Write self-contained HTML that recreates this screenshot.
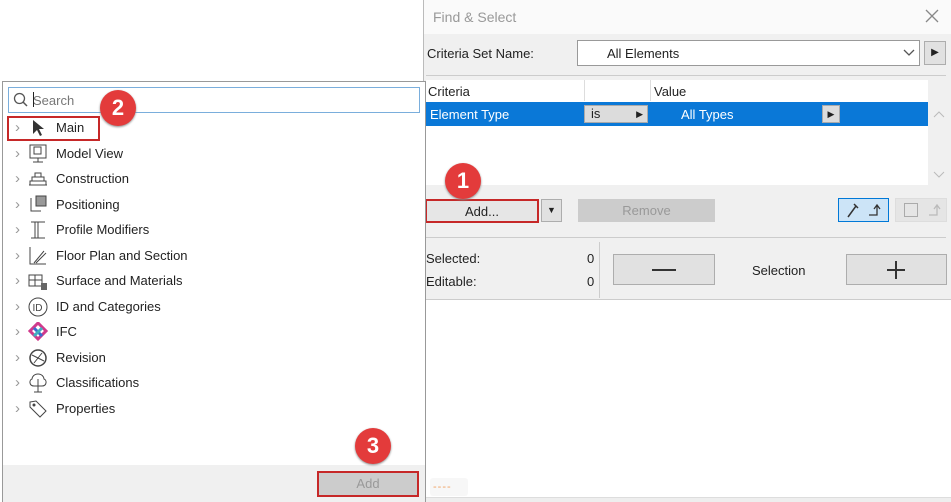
<!DOCTYPE html>
<html><head><style>
*{box-sizing:border-box;margin:0;padding:0}
body{width:951px;height:502px;background:#fff;position:relative;overflow:hidden;font-family:"Liberation Sans",sans-serif;font-size:13px;color:#222}
.a{position:absolute}
.badge{position:absolute;width:36px;height:36px;border-radius:50%;background:#e33b3b;color:#fff;font-weight:bold;font-size:22px;text-align:center;line-height:36px;box-shadow:0 1px 2px #888}
.btn{position:absolute;background:#e1e1e1;border:1px solid #adadad;text-align:center}
.row{position:absolute;left:10px;height:24px;line-height:24px}
.row .ch{position:absolute;left:5px;top:0;color:#999;font-size:15px}
.row svg{position:absolute;left:18px;top:2px}
.row span{position:absolute;left:46px;white-space:nowrap}
</style></head><body>
<div class="a" style="left:423px;top:0;width:528px;height:300px;background:#f0f0f0;border-left:1px solid #bbb;border-bottom:1px solid #ccc"></div>
<div class="a" style="left:424px;top:0;width:527px;height:34px;background:#fafafa"></div>
<div class="a" style="left:433px;top:9px;color:#999;font-size:14px">Find &amp; Select</div>
<svg class="a" style="left:925px;top:9px" width="14" height="14"><path d="M1 1L13 13M13 1L1 13" stroke="#888" stroke-width="1.3"/></svg>
<div class="a" style="left:427px;top:46px;font-size:13px">Criteria Set Name:</div>
<div class="a" style="left:577px;top:40px;width:343px;height:26px;background:#fff;border:1px solid #999"></div>
<div class="a" style="left:607px;top:46px">All Elements</div>
<svg class="a" style="left:903px;top:49px" width="12" height="8"><path d="M1 1L6 6L11 1" fill="none" stroke="#555" stroke-width="1.3"/></svg>
<div class="btn" style="left:924px;top:41px;width:22px;height:24px;font-size:10px;line-height:22px">▶</div>
<div class="a" style="left:426px;top:75px;width:520px;height:1px;background:#ccc"></div>
<div class="a" style="left:426px;top:80px;width:502px;height:105px;background:#fff"></div>
<div class="a" style="left:428px;top:84px">Criteria</div>
<div class="a" style="left:584px;top:80px;width:1px;height:21px;background:#ddd"></div>
<div class="a" style="left:650px;top:80px;width:1px;height:21px;background:#ddd"></div>
<div class="a" style="left:654px;top:84px">Value</div>
<div class="a" style="left:426px;top:102px;width:502px;height:24px;background:#0a78d7"></div>
<div class="a" style="left:430px;top:107px;color:#fff">Element Type</div>
<div class="a" style="left:584px;top:105px;width:64px;height:18px;background:#dcdcdc;border:1px solid #aaa;padding-left:6px;line-height:16px">is<span style="position:absolute;right:4px;font-size:9px">▶</span></div>
<div class="a" style="left:681px;top:107px;color:#fff">All Types</div>
<div class="a" style="left:822px;top:105px;width:18px;height:18px;background:#dcdcdc;border:1px solid #aaa;font-size:9px;text-align:center;line-height:16px">▶</div>
<svg class="a" style="left:933px;top:110px" width="12" height="8"><path d="M1 7L6 2L11 7" fill="none" stroke="#bbb"/></svg>
<svg class="a" style="left:933px;top:171px" width="12" height="8"><path d="M1 1L6 6L11 1" fill="none" stroke="#bbb"/></svg>
<div class="btn" style="left:425px;top:199px;width:114px;height:24px;line-height:22px;border:2px solid #c62828;background:#e6e6e6">Add...</div>
<div class="btn" style="left:541px;top:199px;width:21px;height:23px;font-size:9px;line-height:21px">▼</div>
<div class="btn" style="left:578px;top:199px;width:137px;height:23px;line-height:21px;color:#999;background:#ccc;border-color:#ccc">Remove</div>
<div class="a" style="left:838px;top:198px;width:51px;height:24px;background:#cce4f7;border:1px solid #0078d7"></div>
<svg class="a" style="left:845px;top:201px" width="40" height="18"><path d="M3 16L11 5M9 3l4 4" stroke="#333" stroke-width="1.5" fill="none"/><path d="M24 14h8v-9M29 8l3-4 3 4" stroke="#333" stroke-width="1.3" fill="none"/></svg>
<div class="a" style="left:895px;top:198px;width:52px;height:24px;background:#e5e5e5;border:1px solid #ddd"></div>
<div class="a" style="left:904px;top:203px;width:14px;height:14px;border:1px solid #aaa"></div>
<svg class="a" style="left:926px;top:201px" width="20" height="18"><path d="M3 14h8v-9M8 8l3-4 3 4" stroke="#bbb" stroke-width="1.3" fill="none"/></svg>
<div class="a" style="left:426px;top:237px;width:520px;height:1px;background:#ccc"></div>
<div class="a" style="left:599px;top:242px;width:1px;height:56px;background:#ccc"></div>
<div class="a" style="left:426px;top:251px">Selected:</div><div class="a" style="left:587px;top:251px">0</div>
<div class="a" style="left:426px;top:274px">Editable:</div><div class="a" style="left:587px;top:274px">0</div>
<div class="btn" style="left:613px;top:254px;width:102px;height:31px"><div style="position:absolute;left:38px;top:14px;width:24px;height:2px;background:#333"></div></div>
<div class="a" style="left:752px;top:263px">Selection</div>
<div class="btn" style="left:846px;top:254px;width:101px;height:31px"><div style="position:absolute;left:40px;top:14px;width:18px;height:2px;background:#333"></div><div style="position:absolute;left:48px;top:6px;width:2px;height:18px;background:#333"></div></div>
<div class="a" style="left:425px;top:497px;width:526px;height:5px;background:#eee;border-top:1px solid #ddd"></div>
<div class="a" style="left:430px;top:478px;width:38px;height:18px;background:#f7f7f7;border-radius:3px"></div>
<div class="a" style="left:433px;top:481px;color:#f0a060;font-size:11px;letter-spacing:1px">----</div>
<div class="a" style="left:2px;top:81px;width:424px;height:421px;border:1px solid #999;background:#fff"></div>
<div class="a" style="left:3px;top:465px;width:422px;height:37px;background:#f0f0f0"></div>
<div class="a" style="left:8px;top:87px;width:412px;height:26px;border:1px solid #7aaedc"></div>
<svg class="a" style="left:13px;top:92px" width="16" height="16"><circle cx="6.5" cy="6.5" r="5" fill="none" stroke="#555" stroke-width="1.3"/><line x1="10" y1="10" x2="14" y2="14" stroke="#555" stroke-width="1.5"/></svg>
<div class="a" style="left:33px;top:93px;color:#777">Search</div>
<div class="a" style="left:33px;top:92px;width:1px;height:15px;background:#222"></div>
<div class="a" style="left:7px;top:116px;width:93px;height:25px;border:2px solid #c62828"></div>
<div class="row" style="top:116px"><span class="ch">›</span><svg width="20" height="20"><path d="M5 2 L5 16 L9 12 L12 18 L14 17 L11 11 L16 11Z" fill="#333"/></svg><span>Main</span></div>
<div class="row" style="top:142px"><span class="ch">›</span><svg width="20" height="20"><rect x="2" y="1" width="16" height="13" fill="none" stroke="#444"/><rect x="6" y="3" width="7" height="7" fill="none" stroke="#444"/><path d="M10 14v4M5 18h10" stroke="#444"/></svg><span>Model View</span></div>
<div class="row" style="top:167px"><span class="ch">›</span><svg width="20" height="20"><path d="M1 16h18M2 12h16v4H2zM4 8h12v4H4zM7 4h6v4H7z" fill="none" stroke="#444"/></svg><span>Construction</span></div>
<div class="row" style="top:193px"><span class="ch">›</span><svg width="20" height="20"><rect x="8" y="1" width="10" height="10" fill="#999" stroke="#444"/><path d="M3 3v13h10" fill="none" stroke="#444"/></svg><span>Positioning</span></div>
<div class="row" style="top:218px"><span class="ch">›</span><svg width="20" height="20"><path d="M3 2h14M3 18h14M10 2v16M7 2v16" fill="none" stroke="#444"/></svg><span>Profile Modifiers</span></div>
<div class="row" style="top:244px"><span class="ch">›</span><svg width="20" height="20"><path d="M2 1v17h16M6 17l10-12M8 17l10-10" fill="none" stroke="#444"/></svg><span>Floor Plan and Section</span></div>
<div class="row" style="top:269px"><span class="ch">›</span><svg width="20" height="20"><rect x="1" y="4" width="13" height="11" fill="none" stroke="#444"/><path d="M1 9h13M7 4v11" stroke="#444"/><rect x="13" y="12" width="6" height="7" fill="#666"/></svg><span>Surface and Materials</span></div>
<div class="row" style="top:295px"><span class="ch">›</span><svg width="20" height="20"><circle cx="10" cy="10" r="9" fill="none" stroke="#444"/><text x="4.5" y="14" font-size="10" font-family="Liberation Sans" fill="#444">ID</text></svg><span>ID and Categories</span></div>
<div class="row" style="top:320px"><span class="ch">›</span><svg width="20" height="20"><path d="M10 1l8 8-8 8-8-8z" fill="none" stroke="#d03a8c" stroke-width="3"/><path d="M6 6l8 8" stroke="#3a6cd0" stroke-width="3"/><path d="M14 6l-8 8" stroke="#40b0c0" stroke-width="3"/></svg><span>IFC</span></div>
<div class="row" style="top:346px"><span class="ch">›</span><svg width="20" height="20"><circle cx="10" cy="10" r="8" fill="none" stroke="#444" stroke-width="1.5"/><path d="M4 7l12 6M6 15l8-10" stroke="#444"/></svg><span>Revision</span></div>
<div class="row" style="top:371px"><span class="ch">›</span><svg width="20" height="20"><path d="M10 1c-4 0-6 3-6 5-3 1-3 7 2 7h8c5 0 5-6 2-7 0-2-2-5-6-5zM10 6v13M6 19h8" fill="none" stroke="#444"/></svg><span>Classifications</span></div>
<div class="row" style="top:397px"><span class="ch">›</span><svg width="20" height="20"><path d="M2 3l6-1 10 10-6 6L2 8z" fill="none" stroke="#444"/><circle cx="6" cy="6" r="1.5" fill="#444"/></svg><span>Properties</span></div>
<div class="btn" style="left:317px;top:471px;width:102px;height:26px;line-height:22px;color:#999;background:#ccc;border:2px solid #c62828">Add</div>
<div class="badge" style="left:100px;top:90px">2</div>
<div class="badge" style="left:445px;top:163px">1</div>
<div class="badge" style="left:355px;top:428px">3</div>
</body></html>
